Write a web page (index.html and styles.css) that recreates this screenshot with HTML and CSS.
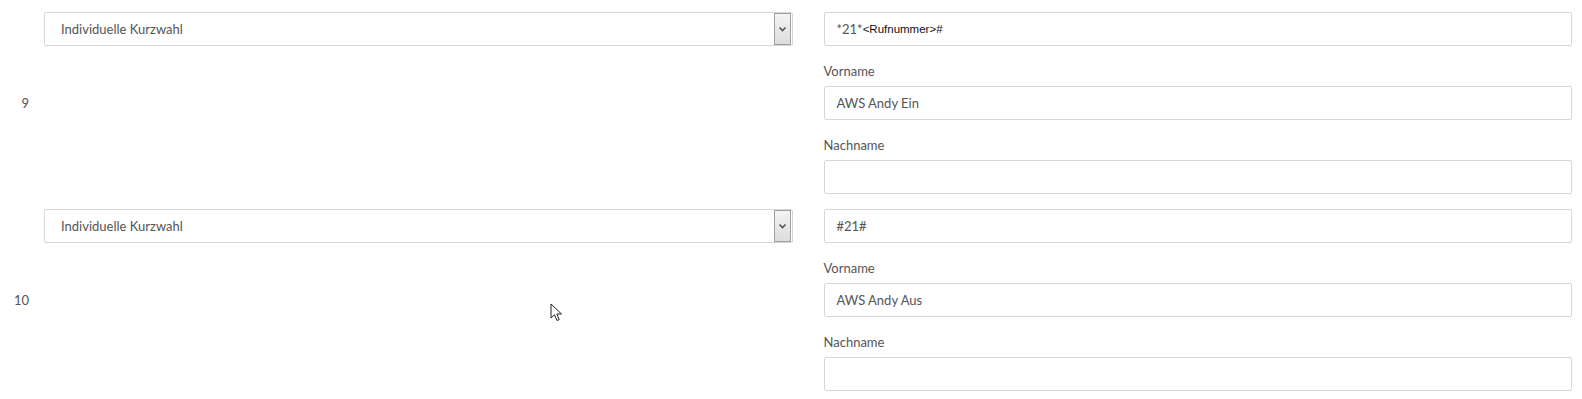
FILE: index.html
```html
<!DOCTYPE html>
<html lang="de">
<head>
    <meta charset="UTF-8">
    <title>Kurzwahl</title>
    <link rel="stylesheet" href="styles.css">
</head>
<body>
    <div class="rows">
        <div class="row">
            <div class="num">9</div>
            <div class="type-cell">
                <div class="select">
                    <span class="select-text">Individuelle Kurzwahl</span>
                    <span class="select-arrow">
                        <svg width="9" height="6" viewBox="0 0 9 6"><path d="M1.5 1.5 L4.5 4.5 L7.5 1.5" fill="none" stroke="#555" stroke-width="1.6"/></svg>
                    </span>
                </div>
            </div>
            <div class="fields">
                <div class="field">*21*<span class="raw">&lt;Rufnummer&gt;#</span></div>
                <div class="label">Vorname</div>
                <div class="field">AWS Andy Ein</div>
                <div class="label">Nachname</div>
                <div class="field"></div>
            </div>
        </div>
        <div class="row">
            <div class="num">10</div>
            <div class="type-cell">
                <div class="select">
                    <span class="select-text">Individuelle Kurzwahl</span>
                    <span class="select-arrow">
                        <svg width="9" height="6" viewBox="0 0 9 6"><path d="M1.5 1.5 L4.5 4.5 L7.5 1.5" fill="none" stroke="#555" stroke-width="1.6"/></svg>
                    </span>
                </div>
                <svg class="cursor" width="14" height="20" viewBox="0 0 14 20"><path d="M1 1 L1 15 L4.5 11.8 L7 17.5 L9.2 16.5 L6.8 11 L11.5 11 Z" fill="#fff" stroke="#222" stroke-width="1" stroke-linejoin="round"/></svg>
            </div>
            <div class="fields">
                <div class="field">#21#</div>
                <div class="label">Vorname</div>
                <div class="field">AWS Andy Aus</div>
                <div class="label">Nachname</div>
                <div class="field"></div>
            </div>
        </div>
    </div>
</body>
</html>
```

FILE: styles.css
```css
body {
    margin: 0;
    background: #fff;
    font-family: Lato, "Open Sans", sans-serif;
    font-size: 13px;
    color: #555;
}
.rows {
    display: flex;
    flex-direction: column;
    gap: 15px;
    padding: 12px 10px 0 0;
}
.row {
    display: grid;
    grid-template-columns: 44px 1fr 31px 1fr;
}
.num {
    align-self: center;
    text-align: right;
    padding-right: 15px;
    color: #555;
}
.type-cell {
    position: relative;
}

/* fake select box */
.select {
    display: flex;
    align-items: center;
    height: 34px;
    box-sizing: border-box;
    border: 1px solid #d6d6d6;
    border-radius: 2px;
}
.select-text {
    flex: 1;
    padding-left: 16px;
}
.select-arrow {
    display: flex;
    align-items: center;
    justify-content: center;
    width: 15px;
    height: 30px;
    margin-right: 1px;
    border: 1px solid #a0a0a0;
    background: linear-gradient(to bottom, #f4f4f4, #dcdcdc);
}
.cursor {
    position: absolute;
    left: 506px;
    top: 94px;
}

.fields {
    grid-column: 4;
    display: flex;
    flex-direction: column;
}
.field {
    display: flex;
    align-items: center;
    height: 34px;
    box-sizing: border-box;
    padding-left: 12px;
    border: 1px solid #d6d6d6;
    border-radius: 2px;
}
.raw {
    font-family: "Liberation Sans", Arial, sans-serif;
    font-size: 11.5px;
    color: #111;
}
.label {
    height: 20px;
    line-height: 20px;
    margin: 15px 0 5px;
    color: #555;
}
```
